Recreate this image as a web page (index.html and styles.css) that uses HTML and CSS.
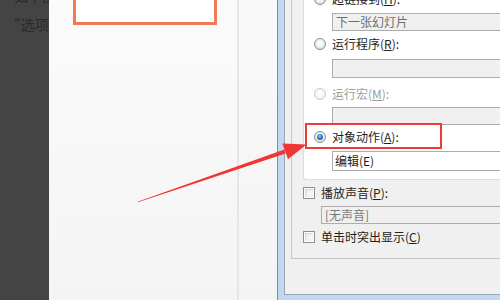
FILE: index.html
```html
<!DOCTYPE html>
<html lang="zh-CN">
<head>
<meta charset="utf-8">
<title>动作设置</title>
<link rel="stylesheet" href="styles.css">
</head>
<body>
<div class="screen">
  <div class="side">
    <p class="side-line">如下图所示在</p>
    <p class="side-line">"选项卡</p>
  </div>
  <div class="doc">
    <div class="shape"></div>
  </div>
  <div class="rule"></div>
  <div class="gutter"></div>
  <div class="dialog">
    <div class="dialog-body">
      <div class="group">
        <div class="panel">
          <div class="opt"><span class="radio"></span><span>超链接到(<u>H</u>):</span></div>
          <div class="field field-off field-1">下一张幻灯片</div>
          <div class="opt opt-2"><span class="radio"></span><span>运行程序(<u>R</u>):</span></div>
          <div class="field field-off field-2"></div>
          <div class="opt opt-3 opt-off"><span class="radio radio-off"></span><span>运行宏(<u>M</u>):</span></div>
          <div class="field field-off field-3"></div>
          <div class="opt opt-4"><span class="radio radio-on"></span><span>对象动作(<u>A</u>):</span><span class="highlight"></span></div>
          <div class="field field-4">编辑(E)</div>
        </div>
        <div class="opt check-row check-row-1"><span class="check"></span><span>播放声音(<u>P</u>):</span></div>
        <div class="field field-off field-sound">[无声音]</div>
        <div class="opt check-row check-row-2"><span class="check"></span><span>单击时突出显示(<u>C</u>)</span></div>
      </div>
    </div>
  </div>
  <svg class="arrow" width="500" height="300" viewBox="0 0 500 300">
    <polygon points="138,202.3 285.6,153.5 284.4,149.4 137.6,201.7" fill="#f03535"/>
    <polygon points="306.5,144.5 282.4,143.6 288,159.2" fill="#f03535"/>
  </svg>
</div>
</body>
</html>
```

FILE: styles.css
```css
* { box-sizing: border-box; }
html, body { margin: 0; padding: 0; }
body {
  width: 500px;
  height: 300px;
  overflow: hidden;
  font-family: "Noto Sans CJK SC", "Noto Sans", sans-serif;
  color: #1e1e1e;
}
.screen {
  position: relative;
  display: flex;
  width: 500px;
  height: 300px;
  overflow: hidden;
}
.side {
  flex: none;
  width: 49px;
  background: #444444;
  overflow: hidden;
  padding: 0 0 0 14px;
}
.side-line {
  margin: 0;
  white-space: nowrap;
  font-size: 14px;
  line-height: 24px;
  color: #2a2a2a;
}
.side-line:first-child { margin-top: -16px; margin-bottom: 4px; }
.doc {
  flex: none;
  width: 188px;
  background: linear-gradient(#fbfbfb, #f4f4f4);
  padding-left: 24px;
}
.shape {
  width: 144px;
  height: 35px;
  margin-top: -10px;
  background: #ffffff;
  border: 3px solid #f27a56;
}
.rule {
  flex: none;
  width: 2px;
  background: #e6e6e6;
}
.gutter {
  flex: none;
  width: 38px;
  background: linear-gradient(#f9f9f9, #f4f4f4);
}
.dialog {
  flex: none;
  width: 300px;
  align-self: flex-start;
  background: #c3d8ef;
  border-left: 1px solid #7d8ea0;
  padding: 0 0 6px 6px;
}
.dialog-body {
  background: #f0f0f0;
  border-left: 1px solid #9aa8b6;
  border-bottom: 1px solid #9aa8b6;
  padding: 0 0 35px 6px;
}
.group {
  margin-top: -40px;
  border: 1px solid #c6c6c6;
  border-right: none;
  padding: 10px 0 13px 11px;
}
.panel {
  background: #ffffff;
  border: 1px solid #d8dde3;
  border-right: none;
  border-radius: 3px 0 0 3px;
  padding: 19px 0 8px 10px;
}
.opt {
  position: relative;
  display: flex;
  align-items: center;
  gap: 6px;
  height: 16px;
  font-size: 12px;
  line-height: 16px;
  white-space: nowrap;
}
.opt u { text-decoration: underline; text-underline-offset: 1px; }
.opt-2 { margin-top: 5px; }
.opt-3 { margin-top: 8px; }
.opt-4 { margin-top: 4px; }
.opt-off { color: #9c9c9c; }
.radio {
  flex: none;
  width: 12px;
  height: 12px;
  border-radius: 50%;
  border: 1px solid #8b8b8b;
  background: radial-gradient(circle at 50% 40%, #ffffff 0%, #f2f2f2 45%, #d0d0d0 100%);
  position: relative;
}
.radio-off {
  border-color: #c6c6c6;
  background: radial-gradient(circle at 50% 40%, #ffffff 0%, #f6f6f6 60%, #e4e4e4 100%);
}
.radio-on::after {
  content: "";
  position: absolute;
  left: 2px;
  top: 2px;
  width: 6px;
  height: 6px;
  border-radius: 50%;
  background: radial-gradient(circle at 45% 35%, #8fd0ff 0%, #2a7fd0 45%, #0d3f78 100%);
}
.highlight {
  position: absolute;
  left: -9px;
  top: -6px;
  width: 137px;
  height: 26px;
  border: 2px solid #f03a3a;
}
.field {
  margin-left: 18px;
  height: 18px;
  border: 1px solid #acacac;
  background: #ffffff;
  font-size: 12px;
  line-height: 16px;
  padding-left: 3px;
  white-space: nowrap;
}
.field-off {
  background: #f0f0f0;
  color: #6d6d6d;
}
.field-1 { margin-top: 6px; }
.field-2 { margin-top: 7px; height: 19px; }
.field-3 { margin-top: 5px; }
.field-4 { margin-top: 6px; height: 20px; line-height: 18px; padding-left: 2px; }
.check-row-1 { margin-top: 5px; }
.check-row-2 { margin-top: 5px; }
.check {
  flex: none;
  width: 12px;
  height: 12px;
  border: 1px solid #8e8e8e;
  background: #f4f4f4;
  box-shadow: inset 0 0 0 1px #ffffff, inset 1px 1px 2px 1px #d2d2d2;
}
.field-sound {
  margin-top: 5px;
  color: #7a7a7a;
}
.arrow {
  position: absolute;
  left: 0;
  top: 0;
  pointer-events: none;
}
```
